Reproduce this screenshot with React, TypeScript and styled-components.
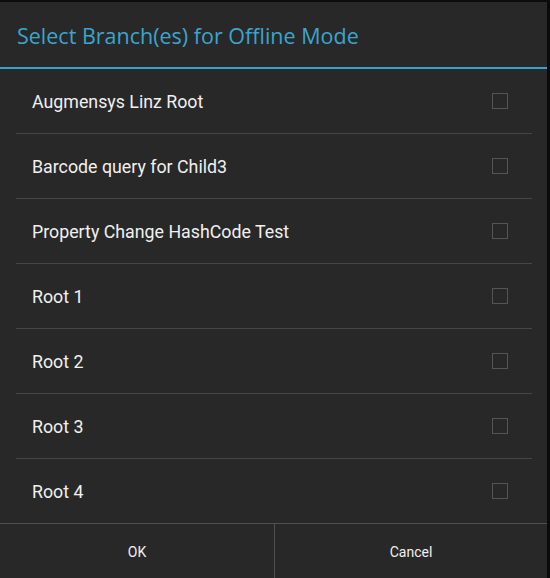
import React, { useState } from 'react';
import styled, { createGlobalStyle } from 'styled-components';

const GlobalStyle = createGlobalStyle`
  html, body {
    margin: 0;
    padding: 0;
    background: #000000;
  }
  * {
    box-sizing: border-box;
  }
`;

const Dialog = styled.div`
  width: 550px;
  height: 578px;
  background: #282828;
  border-top: 2px solid #0c0c0c;
  border-right: 3px solid #0a0a0a;
  display: flex;
  flex-direction: column;
  font-family: Roboto, 'Noto Sans', sans-serif;
`;

const Title = styled.h1`
  margin: 0;
  height: 67px;
  padding: 2px 0 0 17px;
  display: flex;
  align-items: center;
  font-family: 'Open Sans', 'Noto Sans', sans-serif;
  font-weight: 400;
  font-size: 21.5px;
  color: #3aa5cd;
  border-bottom: 2px solid #33a3cb;
`;

const List = styled.ul`
  list-style: none;
  margin: 0 15px 0 16px;
  padding: 0;
  flex: 1;
`;

const Row = styled.li`
  height: 65px;
  display: flex;
  align-items: center;
  justify-content: space-between;
  padding: 0 24px 0 16px;
  border-bottom: 1px solid #464646;
  cursor: pointer;

  &:last-child {
    border-bottom: none;
    height: 64px;
  }
`;

const Label = styled.span`
  font-size: 17.8px;
  color: #f0f0f0;
`;

const Check = styled.span<{ $checked: boolean }>`
  width: 16px;
  height: 16px;
  border: 1.5px solid #555555;
  background: ${(p) => (p.$checked ? '#33a3cb' : 'transparent')};
`;

const Footer = styled.div`
  height: 55px;
  display: grid;
  grid-template-columns: 274px 1fr;
  border-top: 1px solid #505050;
`;

const Button = styled.button`
  background: transparent;
  border: none;
  color: #f0f0f0;
  font-family: Roboto, 'Noto Sans', sans-serif;
  font-size: 14px;
  padding: 2px 0 0;
  cursor: pointer;

  & + & {
    border-left: 1px solid #505050;
  }
`;

const branches = [
  'Augmensys Linz Root',
  'Barcode query for Child3',
  'Property Change HashCode Test',
  'Root 1',
  'Root 2',
  'Root 3',
  'Root 4',
];

const App = () => {
  const [selected, setSelected] = useState<string[]>([]);

  const toggle = (name: string) => {
    setSelected((cur) =>
      cur.includes(name) ? cur.filter((n) => n !== name) : [...cur, name]
    );
  };

  return (
    <>
      <GlobalStyle />
      <Dialog>
        <Title>Select Branch(es) for Offline Mode</Title>
        <List>
          {branches.map((b) => (
            <Row key={b} onClick={() => toggle(b)}>
              <Label>{b}</Label>
              <Check $checked={selected.includes(b)} />
            </Row>
          ))}
        </List>
        <Footer>
          <Button type="button">OK</Button>
          <Button type="button">Cancel</Button>
        </Footer>
      </Dialog>
    </>
  );
};

export default App;
